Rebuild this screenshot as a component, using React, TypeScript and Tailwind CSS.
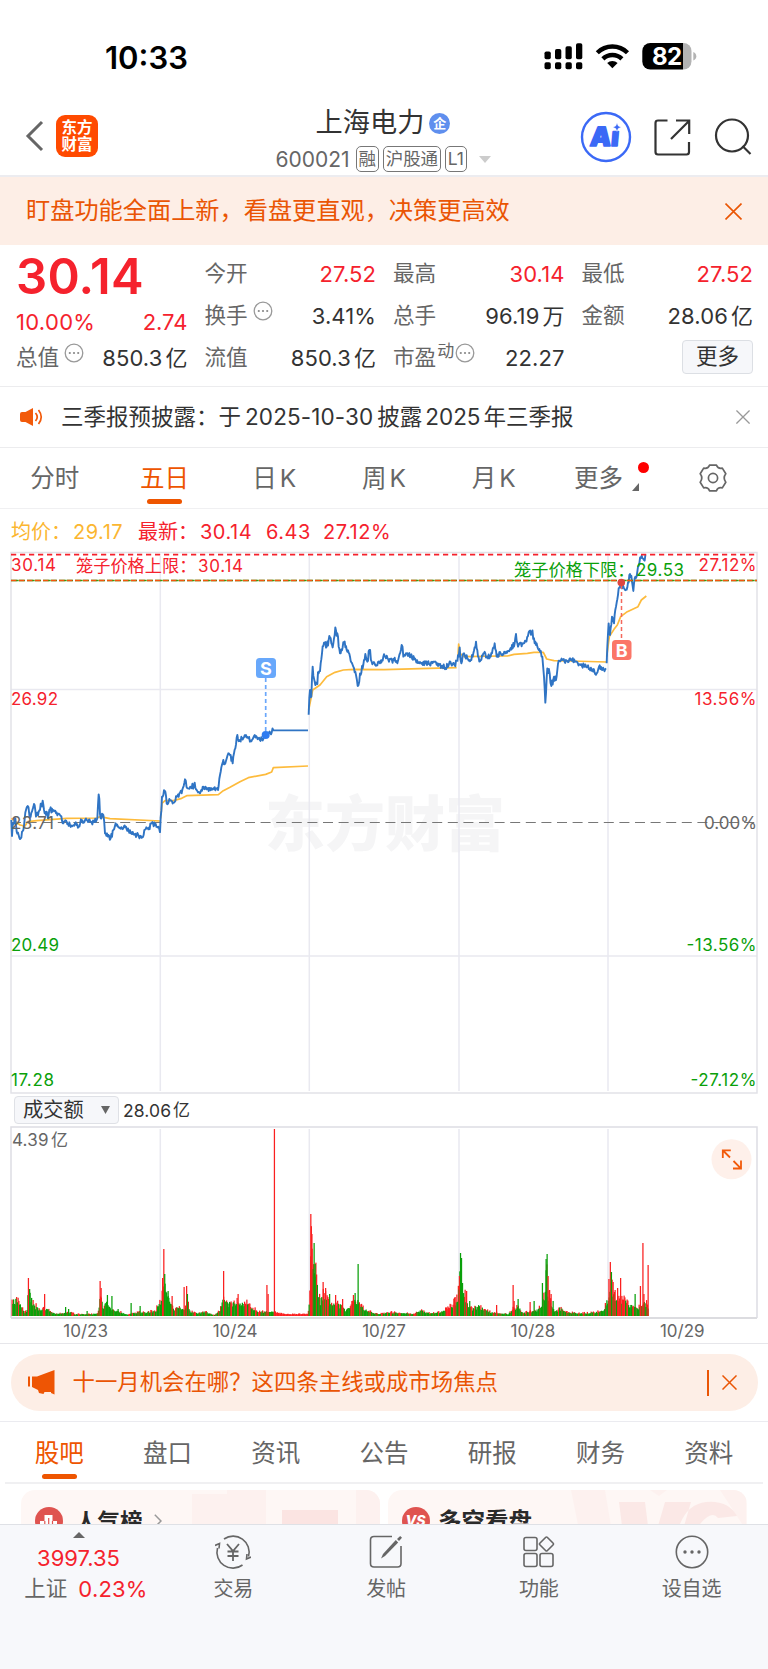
import React from "react";

type Pt = [number, number];

/* ---------- chart data, in units of a third of a pixel ---------- */

const PRICE: Pt[][] = [
  [[34,930],[36,978],[40,940],[46,925],[50,965],[62,985],[70,960],[78,900],[83,888],[88,915],[92,920],[102,882],[108,920],[120,900],[128,872],[134,910],[140,905],[144,925],[152,892],[158,905],[168,910],[180,915],[190,940],[200,935],[210,945],[225,940],[236,950],[245,935],[260,930],[275,938],[290,930],[292,925],[296,853],[302,925],[310,915],[315,970],[325,975],[332,985],[340,960],[347,940],[360,955],[378,950],[392,970],[410,975],[427,982],[433,960],[445,958],[455,940],[465,945],[476,950],[480,968]],
  [[480,968],[486,860],[494,842],[500,880],[510,870],[520,878],[530,860],[538,850],[545,850],[555,808],[562,835],[575,835],[584,818],[590,840],[600,850],[610,830],[620,838],[640,835],[654,840],[660,795],[670,750],[676,760],[685,730],[692,735],[698,760],[706,715],[712,675],[718,690],[726,685],[738,675],[745,685],[752,692],[762,678],[775,685],[786,688],[797,675],[815,668],[820,661]],
  [[926,614],[930,540],[934,560],[938,470],[944,515],[950,520],[956,490],[962,460],[966,430],[972,398],[980,410],[988,378],[994,400],[1000,400],[1006,352],[1012,370],[1016,410],[1022,430],[1032,398],[1040,420],[1050,440],[1060,470],[1068,495],[1073,528],[1080,490],[1088,475],[1096,432],[1102,455],[1108,420],[1115,455],[1130,465],[1140,460],[1150,440],[1160,437],[1167,455],[1182,450],[1194,452],[1205,405],[1210,440],[1220,430],[1232,435],[1247,450],[1262,458],[1277,460],[1287,462],[1302,455],[1312,460],[1327,468],[1337,474],[1347,462],[1362,460],[1370,455]],
  [[1372,455],[1376,440],[1379,412],[1384,460],[1392,430],[1402,445],[1414,450],[1420,430],[1428,395],[1434,440],[1442,450],[1452,430],[1462,440],[1472,440],[1484,400],[1490,440],[1502,430],[1517,430],[1530,418],[1536,405],[1542,410],[1548,372],[1554,410],[1567,400],[1577,395],[1586,367],[1595,367],[1602,385],[1610,400],[1620,425],[1627,440],[1632,500],[1636,578],[1642,475],[1649,490],[1654,528],[1662,500],[1668,510],[1676,452],[1687,450],[1702,453],[1714,448],[1727,455],[1742,465],[1762,470],[1777,478],[1790,490],[1797,470],[1807,480],[1818,475]],
  [[1820,460],[1826,340],[1830,375],[1836,320],[1842,340],[1848,290],[1856,235],[1862,222],[1867,235],[1874,238],[1882,232],[1890,192],[1896,215],[1900,243],[1904,205],[1912,185],[1918,160],[1925,137],[1932,150],[1938,137]],
];

const AVERAGE: Pt[][] = [
  [[34,925],[60,945],[75,948],[83,935],[110,932],[200,925],[290,924],[300,920],[330,926],[480,933]],
  [[482,925],[486,880],[495,872],[520,872],[545,865],[560,857],[655,854],[670,842],[690,832],[720,815],[745,803],[797,793],[815,786],[820,773],[924,768]],
  [[926,600],[932,570],[938,540],[960,525],[980,500],[1005,487],[1030,480],[1060,478],[1152,479],[1370,473]],
  [[1374,440],[1376,402],[1380,430],[1392,440],[1502,438],[1522,438],[1542,433],[1582,430],[1602,427],[1630,427],[1640,447],[1662,452],[1712,453],[1820,456]],
  [[1820,440],[1828,380],[1842,358],[1852,345],[1862,320],[1882,305],[1914,290],[1924,270],[1939,258]],
];

/* Noise amplitude of the minute line, per day */
const NOISE = [12, 10, 14, 12, 10];

/* Turnover envelope: x and bar height in pixels */
const ENVELOPE: Pt[] = [
  [11,8],[13,20],[18,17],[21,10],[25,4],[27,6],[28,26],[30,25],[33,13],[40,7],[46,8],[55,3],[63,3],[70,4],[75,2],[90,2],[98,3],[100,20],[104,10],[107,18],[111,7],[118,5],[128,1.5],[134,4],[145,4],[155,6],[160,14],[162,25],[165,42],[167,25],[170,18],[174,7],[181,11],[184,7],[188,14],[190,5],[196,3],[205,5],[214,1],[220,6],[223,18],[228,14],[238,17],[246,14],[252,10],[258,5],[270,5],[275,4],[284,2],[308,2],[310,30],[311,75],[314,60],[317,35],[320,16],[323,24],[326,20],[329,15],[335,13],[341,12],[345,7],[350,9],[354,18],[358,17],[361,11],[367,6],[376,2.5],[392,4],[408,3],[413,2],[421,6],[430,3],[442,5],[450,10],[457,18],[460,50],[462,30],[466,20],[469,10],[473,8],[478,12],[484,7],[492,4],[500,3],[508,2],[514,9],[518,10],[523,3],[528,5],[534,6],[541,9],[545,25],[546,52],[548,25],[551,14],[555,5],[560,9],[566,4],[580,3],[595,4],[604,7],[608,20],[610,38],[613,25],[618,18],[622,20],[628,13],[634,10],[640,10],[645,15],[648,11],
];

/* Single bars that rise above the envelope */
const SPIKES: [number, number, "r" | "g"][] = [
  [28.3,38,"r"],[29.5,27,"g"],[44.5,22,"r"],[65.5,9,"g"],[68.5,7,"g"],[87,5,"g"],[100,35,"r"],[101,28,"r"],[107.3,21,"g"],[111.8,20,"g"],[118,7,"g"],[131,13,"g"],[140,10,"g"],[162.5,38,"r"],[163.7,67,"r"],[164.6,42,"g"],[168,25,"g"],[172,20,"r"],[184,29,"r"],[186.5,30,"r"],[187.3,22,"g"],[223.5,45,"r"],[238,22,"r"],[266.8,31,"r"],[268,22,"r"],[274.3,187,"r"],[310.7,102,"r"],[311.8,82,"r"],[314,73,"g"],[315,52,"g"],[323,34,"r"],[325.5,28,"r"],[329.5,22,"g"],[335.5,21,"r"],[342.5,17,"r"],[353.3,21,"r"],[355,23,"g"],[358,52,"g"],[455,19,"r"],[459.3,40,"r"],[460.4,63,"g"],[461.4,58,"g"],[462.4,33,"g"],[466.5,25,"r"],[469.6,15,"g"],[496.5,11,"r"],[513,31,"r"],[514,15,"r"],[518,17,"g"],[530,14,"r"],[534,15,"g"],[542.3,33,"g"],[546,57,"g"],[547,62,"g"],[548,40,"r"],[549.5,26,"r"],[551,22,"r"],[553,15,"g"],[608.8,37,"r"],[610.2,54,"r"],[611.3,44,"g"],[613,34,"r"],[615,26,"r"],[617.5,28,"r"],[620.5,38,"r"],[635,22,"g"],[640.3,30,"r"],[642.8,73,"r"],[643.8,22,"r"],[648,51,"r"],
];

function random(seed: number) {
  let s = seed;
  return () => {
    s = (s * 16807) % 2147483647;
    return s / 2147483647;
  };
}

const toPixels = ([x, y]: Pt): string => `${(x / 3).toFixed(2)},${(y / 3 - 41).toFixed(2)}`;

function minuteLine(points: Pt[], amp: number, seed: number): string {
  const next = random(seed);
  const out: string[] = [];
  points.forEach((p, i) => {
    out.push(toPixels(p));
    const q = points[i + 1];
    if (!q) return;
    const steps = Math.floor((q[0] - p[0]) / 1.9);
    const calm = q[0] - p[0] > 9 ? 0.6 : 1;
    for (let k = 1; k < steps; k++) {
      const t = k / steps;
      const y = p[1] + (q[1] - p[1]) * t + (next() - 0.5) * 2 * amp * calm;
      out.push(toPixels([p[0] + (q[0] - p[0]) * t, Math.max(136, y)]));
    }
  });
  return out.join(" ");
}

function turnoverBars() {
  const next = random(4241);
  const bars: [number, number, "r" | "g"][] = [];
  for (let x = 12; x < 648.5; x += 0.75) {
    let i = 0;
    while (i < ENVELOPE.length - 2 && ENVELOPE[i + 1][0] < x) i++;
    const [ax, ay] = ENVELOPE[i];
    const [bx, by] = ENVELOPE[i + 1];
    const h = ay + ((by - ay) * (x - ax)) / (bx - ax);
    const onlyRed = x > 275 && x < 309;
    const red = onlyRed || next() < 0.36;
    bars.push([x, Math.max(1, h * (red ? 0.75 + next() * 0.5 : 0.6 + next() * 0.4)), red ? "r" : "g"]);
  }
  return bars;
}

const BARS = [...turnoverBars().filter((b) => b[2] === "r"), ...turnoverBars().filter((b) => b[2] === "g"), ...SPIKES];
const VERTICALS = [160.3, 309.3, 459, 608];
const SANS = "Inter, 'Noto Sans CJK SC', sans-serif";

/* ---------- small icons ---------- */

function Close({ size, color, width }: { size: number; color: string; width: number }) {
  return (
    <svg width={size} height={size} viewBox="0 0 16 16" fill="none" stroke={color} strokeWidth={width}>
      <path d="M0.5 0.5 15.5 15.5M15.5 0.5 0.5 15.5" />
    </svg>
  );
}

function MoreDots() {
  return (
    <svg width="20" height="20" viewBox="0 0 20 20" className="shrink-0" fill="none" stroke="#999">
      <circle cx="10" cy="10" r="8.8" strokeWidth="1.3" />
      <g fill="#888" stroke="none">
        <circle cx="5.8" cy="10" r="1.1" />
        <circle cx="10" cy="10" r="1.1" />
        <circle cx="14.2" cy="10" r="1.1" />
      </g>
    </svg>
  );
}

/* ---------- sections ---------- */

function StatusBar() {
  return (
    <div className="flex h-[88px] justify-between pr-[69px] pl-[105px] pt-[42px]">
      <div className="text-[31px] leading-[31px] font-semibold text-black">10:33</div>
      <div className="flex items-start pt-px">
        <svg width="155" height="28" viewBox="0 0 155 28">
          <rect x="0.5" y="8.5" width="6.3" height="7.8" rx="1.8" />
          <rect x="11" y="6" width="6.3" height="10.3" rx="1.8" />
          <rect x="21.5" y="3.3" width="6.3" height="13" rx="1.8" />
          <rect x="32" y="0.2" width="6.3" height="16.1" rx="1.8" />
          <rect x="0.5" y="19.3" width="6.3" height="7" rx="1.8" />
          <rect x="11" y="19.3" width="6.3" height="7" rx="1.8" />
          <rect x="21.5" y="19.3" width="6.3" height="7" rx="1.8" />
          <rect x="32" y="19.3" width="6.3" height="7" rx="1.8" />
          <g fill="none" stroke="#000" strokeWidth="4.4">
            <path d="M53.3 9.7a21.5 21.5 0 0 1 30.2 0" />
            <path d="M58.9 15.9a13.5 13.5 0 0 1 19 0" />
          </g>
          <path d="M68.4 25.2 63.2 20a7.5 7.5 0 0 1 10.4 0z" />
          <clipPath id="battery">
            <rect x="98.3" y="0" width="49.2" height="26.5" rx="8" />
          </clipPath>
          <g clipPath="url(#battery)">
            <rect x="98" y="0" width="41" height="27" />
            <rect x="139" y="0" width="9" height="27" fill="#b3b3b3" />
          </g>
          <path d="M149.3 9v8.5q3-1.2 3-4.2t-3-4.3z" fill="#b3b3b3" />
          <text x="123" y="22" textAnchor="middle" fontFamily={SANS} fontSize="24" fontWeight="700" fill="#fff" textLength="30">82</text>
        </svg>
      </div>
    </div>
  );
}

function Tag({ children }: { children: React.ReactNode }) {
  return (
    <span className="flex h-[26px] items-center rounded-[5px] border border-[#777] px-[2px] text-[17.5px] leading-none tracking-[-0.2px] text-[#666]">
      {children}
    </span>
  );
}

function Header() {
  return (
    <div className="flex h-[89px] items-start justify-between border-b-2 border-[#ececf0] pr-[16px] pl-[25px]">
      <div className="flex w-[219px] items-center gap-[12px] pt-[27px]">
        <svg width="19" height="32" viewBox="0 0 19 32" fill="none" stroke="#666" strokeWidth="3">
          <path d="M17 2 3 16 17 30" />
        </svg>
        <div className="flex h-[42px] w-[42px] flex-col items-center justify-center rounded-[9px] bg-[#ff4a00] text-[15.5px] leading-[17px] font-bold text-white">
          <span>东方</span>
          <span>财富</span>
        </div>
      </div>
      <div className="flex flex-col items-center pt-[16px]">
        <div className="flex h-[38px] items-center gap-[5px]">
          <span className="text-[27.2px] leading-none text-[#333]">上海电力</span>
          <span className="flex h-[21px] w-[21px] items-center justify-center rounded-full bg-[#5f8fee] text-[13px] leading-none font-bold text-white">企</span>
        </div>
        <div className="flex h-[34px] items-center gap-[4px]">
          <span className="mr-[2px] text-[21px] leading-none text-[#666]">600021</span>
          <Tag>融</Tag>
          <Tag>沪股通</Tag>
          <Tag>L1</Tag>
          <svg className="ml-[8px]" width="12" height="7" viewBox="0 0 12 7" fill="#ccc">
            <path d="M0 0h12L6 7z" />
          </svg>
        </div>
      </div>
      <div className="flex w-[230px] items-center justify-end pt-[23px]">
        <svg width="52" height="52" viewBox="0 0 52 52">
          <circle cx="26" cy="26" r="24" fill="#fff" stroke="#3b69f6" strokeWidth="2.4" />
          <g transform="translate(3.500 0) skewX(-5)">
            <text x="9" y="35" fontFamily={SANS} fontSize="26.500" fontWeight="900" fill="#3b69f6" stroke="#3b69f6" strokeWidth="1.600" strokeLinejoin="round" textLength="29">Aı</text>
          </g>
          <path d="M37 12l1.300 2.900 2.900 1.300-2.900 1.300L37 20.400l-1.300-2.900-2.900-1.300 2.900-1.300z" fill="#3b69f6" stroke="#fff" strokeWidth="0.500" />
        </svg>
        <svg className="ml-[22px]" width="37" height="37" viewBox="0 0 37 37" fill="none" stroke="#333" strokeWidth="2.2">
          <path d="M13.5 1.5H4Q1.5 1.5 1.5 4V33Q1.5 35.5 4 35.5H32.500Q35 35.5 35 33V23M22 1.500H35.200V15M35 2 17 20" />
        </svg>
        <svg className="ml-[23px]" width="38" height="38" viewBox="0 0 38 38" fill="none" stroke="#333" strokeWidth="2.200">
          <circle cx="18" cy="17.500" r="16" />
          <path d="M28.500 28 36.500 36" />
        </svg>
      </div>
    </div>
  );
}

function Banner() {
  return (
    <div className="flex h-[68px] items-center justify-between bg-[#fdeee6] pr-[26px] pl-[26px]">
      <span className="text-[24.200px] leading-none text-[#ea5504]">盯盘功能全面上新，看盘更直观，决策更高效</span>
      <Close size={17} color="#ea5504" width={1.5} />
    </div>
  );
}

function Quote({ label, value, red, extra }: { label: string; value: string; red?: boolean; extra?: React.ReactNode }) {
  const unit = /[万亿]$/.test(value) ? value.slice(-1) : "";
  const number = unit ? value.slice(0, -1) : value;
  return (
    <div className="flex h-[42px] items-center justify-between leading-none">
      <span className="flex items-center text-[21.600px] text-[#666]">
        {label}
        {extra}
      </span>
      <span className={red ? "text-[22px] tracking-[0.1px] text-[#f5222d]" : "text-[22px] tracking-[0.1px] text-[#333]"}>
        {number}
        {unit && <span className="ml-[3px]">{unit}</span>}
      </span>
    </div>
  );
}

function Quotes() {
  const dots = (
    <span className="mb-[10px] ml-[5px]">
      <MoreDots />
    </span>
  );
  return (
    <div className="grid h-[142px] grid-cols-4 gap-x-[17px] border-b border-[#ececee] pt-[8px] pr-[15px] pl-[16px]">
      <div className="flex flex-col">
        <div className="flex h-[47px] items-center text-[49px] leading-none font-semibold tracking-[0.2px] text-[#f5222d]">30.14</div>
        <div className="flex h-[37px] items-center justify-between pt-[6px] text-[22px] leading-none tracking-[0.3px] text-[#f5222d]">
          <span>10.00%</span>
          <span className="tracking-[0px]">2.74</span>
        </div>
        <Quote label="总值" value="850.3亿" extra={dots} />
      </div>
      <div>
        <Quote label="今开" value="27.52" red />
        <Quote label="换手" value="3.41%" extra={dots} />
        <Quote label="流值" value="850.3亿" />
      </div>
      <div>
        <Quote label="最高" value="30.14" red />
        <Quote label="总手" value="96.19万" />
        <Quote
          label="市盈"
          value="22.27"
          extra={
            <>
              <span className="mb-[13px] ml-px text-[17px]">动</span>
              <span className="mb-[10px] ml-px">
                <MoreDots />
              </span>
            </>
          }
        />
      </div>
      <div>
        <Quote label="最低" value="27.52" red />
        <Quote label="金额" value="28.06亿" />
        <div className="flex h-[40px] items-center justify-end">
          <span className="flex h-[34px] w-[71px] items-center justify-center rounded-[4px] border border-[#dcdfe4] bg-[#f6f7fa] text-[21.500px] leading-none text-[#333]">更多</span>
        </div>
      </div>
    </div>
  );
}

function Notice() {
  return (
    <div className="flex h-[61px] items-center border-b border-[#ececee] pr-[18px] pl-[20px]">
      <svg width="23" height="20" viewBox="0 0 23 20">
        <path d="M0 7q0-2 2-2h3.500L13 1v18L5.500 15H2q-2 0-2-2z" fill="#f25a0a" />
        <path d="M15.500 6q3.500 4 0 8M18.500 3q5.500 7 0 14" fill="none" stroke="#f25a0a" strokeWidth="1.700" />
      </svg>
      <span className="ml-[18px] flex flex-1 items-center text-[22.500px] leading-none whitespace-nowrap text-[#333]">
        三季报预披露：于
        <span className="mr-[4px] ml-[4px] tracking-[0.1px]">2025-10-30</span>
        披露
        <span className="mr-[3px] ml-[3px]">2025</span>
        年三季报
      </span>
      <Close size={14} color="#999" width={1.500} />
    </div>
  );
}

function PeriodTabs() {
  const tabs = ["分时", "五日", "日K", "周K", "月K"];
  return (
    <div className="flex h-[61px] border-b border-[#f0f0f2] text-[24.500px] leading-none text-[#666]">
      {tabs.map((tab) => {
        const active = tab === "五日";
        return (
          <div key={tab} className={active ? "flex flex-1 flex-col items-center pt-[18px] text-[#ee5500]" : "flex flex-1 flex-col items-center pt-[18px]"}>
            <span className="flex">
              {tab.endsWith("K") ? (
                <>
                  {tab[0]}
                  <span className="ml-[3px]">K</span>
                </>
              ) : (
                tab
              )}
            </span>
            {active && <span className="mt-[8px] h-[5px] w-[35px] rounded-full bg-[#ee5500]" />}
          </div>
        );
      })}
      <div className="flex flex-1 items-start justify-center pt-[18px]">
        <span className="relative ml-[6px] flex">
          更多
          <svg className="mt-[17px] ml-[9px]" width="7" height="8" viewBox="0 0 7 8" fill="#666">
            <path d="M7 0v8H0z" />
          </svg>
          <span className="absolute -top-[4px] -right-[10px] h-[11px] w-[11px] rounded-full bg-[#fe0000]" />
        </span>
      </div>
      <div className="flex flex-1 items-start justify-center pt-[15px]">
        <svg width="30" height="30" viewBox="0 0 30 30" fill="none" stroke="#666" strokeWidth="1.700">
          <path d="M11.500 2.200h7q1.300 3.800 5.800 2.900l3.500 5.700q-3.200 4.200 0 8.400l-3.500 5.700q-4.500-.9-5.800 2.900h-7q-1.300-3.800-5.800-2.900L2.200 19.200q3.200-4.200 0-8.400l3.500-5.700q4.500.9 5.800-2.900z" strokeLinejoin="round" />
          <circle cx="15" cy="15" r="4.600" />
        </svg>
      </div>
    </div>
  );
}

function Legend() {
  return (
    <div className="flex h-[42px] items-center pt-[3px] pl-[11px] text-[20px] leading-none whitespace-nowrap text-[#f5222d]">
      <span className="w-[62px] text-[#fbb631]">均价：</span>
      <span className="w-[65px] tracking-[0.500px] text-[#fbb631]">29.17</span>
      <span className="w-[62px]">最新：</span>
      <span className="w-[66px] tracking-[0.500px]">30.14</span>
      <span className="w-[57px] tracking-[0.500px]">6.43</span>
      <span className="tracking-[0.500px]">27.12%</span>
    </div>
  );
}

function PriceChart() {
  const label = { fontFamily: SANS, fontSize: 17 };
  return (
    <svg width="768" height="543" viewBox="0 130 768 543" className="block">
      <text x="385" y="425" textAnchor="middle" fontFamily={SANS} fontSize="60" fontWeight="900" fill="#f5f5f6" textLength="240">东方财富</text>
      <g stroke="#e9e9f0" strokeWidth="1.500" fill="none">
        {VERTICALS.map((x) => (
          <path key={x} d={`M${x} 135V670`} />
        ))}
        <path d="M11 268.500H757M11 535H757" />
        <path d="M11 131.500H757V672H11z" stroke="#e2e2e8" />
      </g>
      <path d="M11 401.500H757" stroke="#777" strokeWidth="1.100" strokeDasharray="10 5.600" />
      {AVERAGE.map((day, i) => (
        <polyline key={i} points={day.map(([x, y]) => `${x / 3},${y / 3 + 89}`).join(" ")} fill="none" stroke="#fdbb3c" strokeWidth="1.700" strokeLinejoin="round" />
      ))}
      <g transform="translate(0 130)">
        {PRICE.map((day, i) => (
          <polyline key={i} points={minuteLine(day, NOISE[i], 97 + i * 31)} fill="none" stroke="#2f74c4" strokeWidth="1.900" strokeLinejoin="round" />
        ))}
        <path d="M273 179.400H308" stroke="#2f74c4" strokeWidth="1.700" />
      </g>
      <g {...label} fill="#666">
        <text x="11" y="407.500" textLength="43">23.71</text>
        <text x="757" y="407.500" textAnchor="end" textLength="53">0.00%</text>
      </g>
      <path d="M11 133.700H757" stroke="#f5222d" strokeWidth="1.700" strokeDasharray="5.200 3.800" />
      <path d="M11 159.500H757" stroke="#0c9a0c" strokeWidth="1.500" strokeDasharray="6 2" />
      <path d="M11 159.500H757" stroke="#f5540c" strokeWidth="1.500" strokeDasharray="5.500 2.500" />
      <path d="M16.700 159.500H757" stroke="#3c9a0c" strokeWidth="1.300" strokeDasharray="2 14" />
      <g {...label} fill="#f5222d">
        <text x="11" y="149.500" textLength="45">30.14</text>
        <text x="76" y="151" fontSize="17.200">笼子价格上限：</text>
        <text x="198" y="151" textLength="45">30.14</text>
        <text x="11" y="284" textLength="47">26.92</text>
        <text x="756.500" y="149.500" textAnchor="end" textLength="58">27.12%</text>
        <text x="756.500" y="284" textAnchor="end" textLength="62">13.56%</text>
      </g>
      <g {...label} fill="#0aa00a">
        <text x="514" y="155" fontSize="17.200">笼子价格下限：</text>
        <text x="636" y="155" textLength="48">29.53</text>
        <text x="11" y="530" textLength="48">20.49</text>
        <text x="11" y="664.500" textLength="43">17.28</text>
        <text x="756.500" y="530" textAnchor="end" textLength="70">-13.56%</text>
        <text x="756.500" y="664.500" textAnchor="end" textLength="66">-27.12%</text>
      </g>
      <path d="M265.700 257V312" stroke="#6aa7fb" strokeWidth="1.700" strokeDasharray="4 3" />
      <circle cx="265.700" cy="314" r="4" fill="#2e7cf0" />
      <rect x="256" y="237" width="20" height="20" rx="3.500" fill="#68a8fb" />
      <text x="266" y="253.500" textAnchor="middle" fontFamily={SANS} fontSize="18" fontWeight="700" fill="#fff">S</text>
      <path d="M621.500 164V218" stroke="#f4685c" strokeWidth="1.500" strokeDasharray="4 3" />
      <circle cx="621.300" cy="161.500" r="3.800" fill="#dd4540" />
      <rect x="612" y="219" width="19.500" height="20" rx="3.500" fill="#fb7668" />
      <text x="621.800" y="235.500" textAnchor="middle" fontFamily={SANS} fontSize="18" fontWeight="700" fill="#fff">B</text>
    </svg>
  );
}

function Turnover() {
  return (
    <>
      <div className="flex h-[32px] items-center pl-[14px] leading-none text-[#333]">
        <span className="flex h-[28px] w-[105px] items-center justify-between rounded-[4px] border border-[#dfe1e6] bg-[#f6f7fa] pr-[8px] pl-[8px] text-[20.200px]">
          成交额
          <svg width="9" height="8" viewBox="0 0 9 8" fill="#666">
            <path d="M0 0h9L4.500 8z" />
          </svg>
        </span>
        <span className="ml-[4px] pt-[2px] text-[17.500px] tracking-[0.100px]">28.06</span>
        <span className="ml-[2px] pt-px text-[17px]">亿</span>
      </div>
      <svg width="768" height="193" viewBox="0 1126 768 193" className="block">
        <g stroke="#e9e9f0" strokeWidth="1.500" fill="none">
          {VERTICALS.map((x) => (
            <path key={x} d={`M${x} 1129V1316`} />
          ))}
          <path d="M11 1318V1127H757V1318" stroke="#dddde3" />
        </g>
        <path d="M11 1318H757" stroke="#dcdce0" strokeWidth="2" />
        {BARS.map(([x, h, c], i) => (
          <rect key={i} x={x - 0.500} y={1316 - h} width="1.250" height={h} fill={c === "r" ? "#fa2020" : "#0aa00a"} />
        ))}
        <text x="12" y="1146" fontFamily={SANS} fontSize="17" fill="#666" textLength="36.500">4.39</text>
        <text x="51" y="1146" fontFamily={SANS} fontSize="17" fill="#666">亿</text>
        <circle cx="731.500" cy="1159.300" r="20" fill="#fef0ea" />
        <g fill="none" stroke="#f25a0a" strokeWidth="1.800">
          <path d="M722.800 1158V1150.300H730.800M723 1150.500 730 1157.500" />
          <path d="M741 1160.500V1168.500H733M740.800 1168.300 733.500 1161" />
        </g>
      </svg>
      <div className="flex h-[25px] justify-around border-b border-[#e6e6ea] px-[11px] pt-[3px] text-[17px] leading-[18px] text-[#666]">
        {["10/23", "10/24", "10/27", "10/28", "10/29"].map((d) => (
          <span key={d}>{d}</span>
        ))}
      </div>
    </>
  );
}

function Promo() {
  return (
    <div className="h-[78px] border-b border-[#ebebf0] px-[10.500px] pt-[10px]">
      <div className="flex h-[57px] items-center rounded-full bg-[#fdeee6] pr-[21px] pl-[17px]">
        <svg width="27" height="25" viewBox="0 0 27 25" fill="#ee5504">
          <path d="M0 6.500h2v10H0zM4 6.500h5L26.500 0v24.500L23 23v-1h-6.500l-1 2-4.500-1-1-3L4 17z" />
        </svg>
        <span className="ml-[18px] flex-1 text-[22.400px] leading-none text-[#ea5504]">十一月机会在哪？这四条主线或成市场焦点</span>
        <span className="mr-[13px] h-[26px] w-[1.500px] bg-[#ea5504]" />
        <Close size={15} color="#ea5504" width={1.600} />
      </div>
    </div>
  );
}

function ContentTabs() {
  return (
    <div className="mx-[5px] flex h-[62px] border-b-2 border-[#f0f0f2] text-[24.500px] leading-none text-[#666]">
      {["股吧", "盘口", "资讯", "公告", "研报", "财务", "资料"].map((tab, i) => (
        <div key={tab} className={i === 0 ? "flex flex-1 flex-col items-center pt-[19px] text-[#ee5500]" : "flex flex-1 flex-col items-center pt-[19px]"}>
          {tab}
          {i === 0 && <span className="mt-[8px] h-[5px] w-[35px] rounded-full bg-[#ee5500]" />}
        </div>
      ))}
    </div>
  );
}

function Cards() {
  return (
    <div className="flex h-[40px] gap-[8px] overflow-hidden px-[21px] pt-[6px]">
      <div className="relative h-[120px] flex-1 overflow-hidden rounded-[14px] bg-[#fef7f5]">
        <svg className="absolute inset-0" width="360" height="60" viewBox="0 0 360 60">
          <path d="M171 4h35V0h39v60h-74zM335 0h24v60h-24z" fill="#fdf1ef" />
          <path d="M261 20h56v40h-56z" fill="#fbe4e2" />
        </svg>
        <div className="relative flex items-start pt-[17px] pl-[14px]">
          <svg width="28" height="28" viewBox="0 0 28 28">
            <circle cx="14" cy="14" r="14" fill="#df5450" />
            <path d="M5 14h4.500V8h8v6H22v8H5z" fill="#fff" />
            <path d="M13.700 11v8M9.800 14v6M17.500 14v6" stroke="#df5450" strokeWidth="1.200" />
          </svg>
          <span className="mt-px ml-[12px] text-[22.500px] leading-[28px] font-bold text-[#2a2a2a]">人气榜</span>
          <svg className="mt-[7px] ml-[11px]" width="8" height="14" viewBox="0 0 8 14" fill="none" stroke="#999" strokeWidth="1.500">
            <path d="M.8.800 7 7 .8 13.200" />
          </svg>
        </div>
      </div>
      <div className="relative h-[120px] flex-1 overflow-hidden rounded-[14px] bg-[#fef7f5]">
        <svg className="absolute inset-0" width="360" height="60" viewBox="0 0 360 60">
          <path d="M183 0h34l10 60h-32zM262 0h17l-8 6zM332 0h26v40z" fill="#fdf1ef" />
          <path d="M231 12h26l6 48h-26zM277 12h26l-14 48h-26zM349 26Q340 10 318 12 300 14 292 34h20q12-14 18-6z" fill="#fbe8e6" />
        </svg>
        <div className="relative flex items-start pt-[17px] pl-[14px]">
          <svg width="28" height="28" viewBox="0 0 28 28">
            <circle cx="14" cy="14" r="14" fill="#df5450" />
            <text x="13.500" y="19" textAnchor="middle" fontFamily={SANS} fontSize="14" fontWeight="800" fontStyle="italic" fill="#fff">VS</text>
          </svg>
          <span className="mt-px ml-[8px] text-[23.500px] leading-[28px] font-bold text-[#2a2a2a]">多空看盘</span>
        </div>
      </div>
    </div>
  );
}

function NavItem({ label, children }: { label: string; children: React.ReactNode }) {
  return (
    <div className="flex flex-1 flex-col items-center pt-[9px] text-[20px] leading-none text-[#666]">
      <svg width="36" height="36" viewBox="0 0 36 36" fill="none" stroke="#666" strokeWidth="1.600">
        {children}
      </svg>
      <span className="mt-[9px]">{label}</span>
    </div>
  );
}

function BottomNav() {
  return (
    <div className="flex h-[145px] border-t border-[#dfe1e6] bg-[#f7f8fb]">
      <div className="flex w-[157px] flex-col items-center pt-[7px] leading-none">
        <svg width="12" height="6" viewBox="0 0 12 6" fill="#666">
          <path d="M6 0l6 6H0z" />
        </svg>
        <span className="mt-[9px] text-[22px] text-[#f5222d]">3997.35</span>
        <div className="mt-[9px] ml-[15px] flex items-center text-[21.500px]">
          <span className="text-[#666]">上证</span>
          <span className="ml-[11px] text-[22px] tracking-[0.200px] text-[#f5222d]">0.23%</span>
        </div>
      </div>
      <NavItem label="交易">
        <path d="M9 5A16 16 0 0 1 33.500 22.500M27.500 31A16 16 0 0 1 2.500 14" />
        <path d="M0 11.500 4.500 9.500 4 14.500M36 23l-4.500 2 .5-5" />
        <path d="M12 10l6 7 6-7M18 17v10M12.500 17.500h11M12.500 22h11" strokeWidth="1.800" />
      </NavItem>
      <NavItem label="发帖">
        <path d="M24 2.500H6Q2.500 2.500 2.500 6V29.500Q2.500 33 6 33H29.500Q33 33 33 29.500V12" />
        <path d="M29 5 32.200 2l1.800 1.800L31 7z" fill="#666" stroke="none" />
        <path d="M27.800 6 30.200 8.500 17 22l-4 2.500 2-4.500z" fill="#666" stroke="none" />
      </NavItem>
      <NavItem label="功能">
        <rect x="3" y="3.500" width="13" height="13" rx="2" />
        <rect x="3" y="19.500" width="13" height="13" rx="2" />
        <rect x="19" y="19.500" width="13" height="13" rx="2" />
        <path d="M24.800 3.300q.7-.7 1.400 0l6 6q.7.700 0 1.400l-6 6q-.7.700-1.400 0l-6-6q-.7-.7 0-1.400z" />
      </NavItem>
      <NavItem label="设自选">
        <circle cx="18" cy="18" r="15.700" />
        <g fill="#666" stroke="none">
          <circle cx="11" cy="18" r="1.700" />
          <circle cx="18" cy="18" r="1.700" />
          <circle cx="25" cy="18" r="1.700" />
        </g>
      </NavItem>
    </div>
  );
}

export default function App() {
  return (
    <div className="h-[1669px] w-[768px] overflow-hidden bg-white font-[Inter,'Noto_Sans_CJK_SC',sans-serif]">
      <StatusBar />
      <Header />
      <Banner />
      <Quotes />
      <Notice />
      <PeriodTabs />
      <Legend />
      <PriceChart />
      <Turnover />
      <Promo />
      <ContentTabs />
      <Cards />
      <BottomNav />
    </div>
  );
}
